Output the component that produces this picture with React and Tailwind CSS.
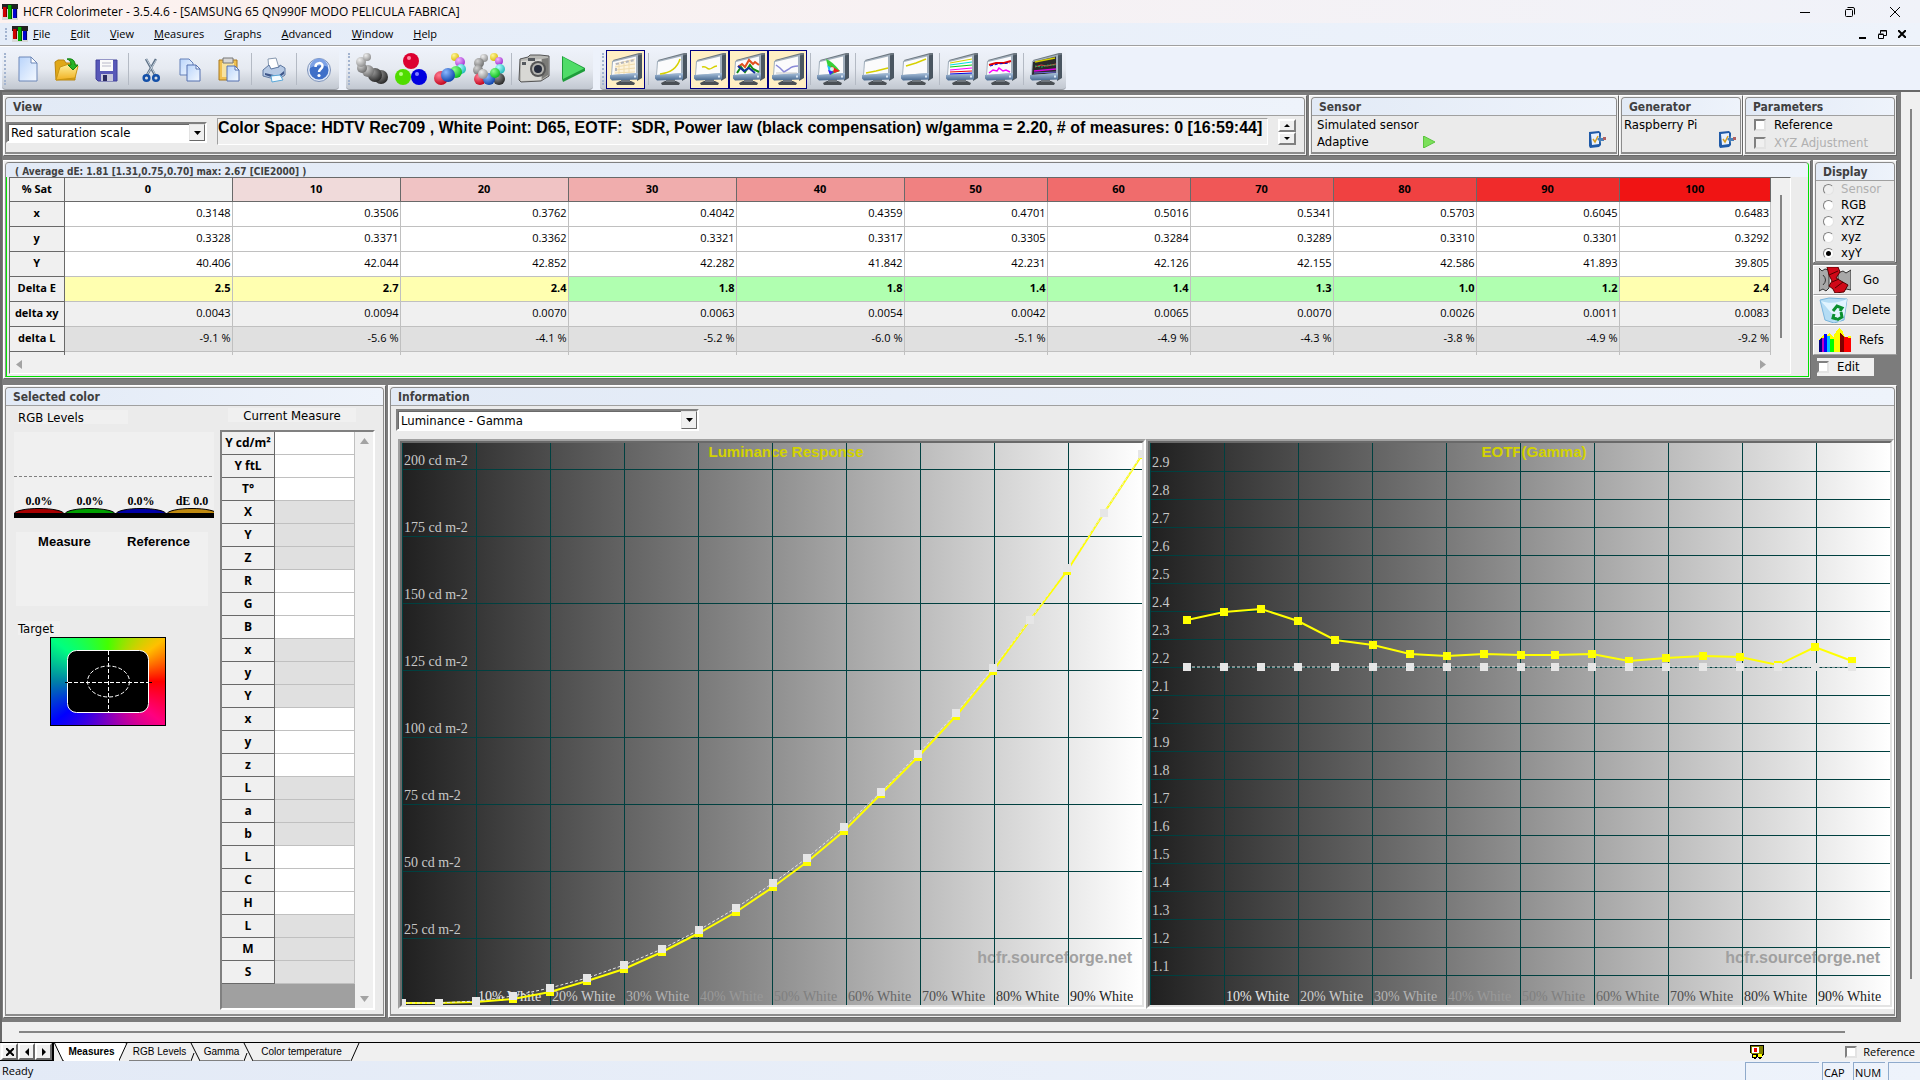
import React from "react";

const menus = ["File", "Edit", "View", "Measures", "Graphs", "Advanced", "Window", "Help"];

const columns = [
  { sat: "0", head: "bg-[#f0f0f0]", x: "0.3148", y: "0.3328", Y: "40.406", de: "2.5", dxy: "0.0043", dl: "-9.1 %", warn: true },
  { sat: "10", head: "bg-[#f0dada]", x: "0.3506", y: "0.3371", Y: "42.044", de: "2.7", dxy: "0.0094", dl: "-5.6 %", warn: true },
  { sat: "20", head: "bg-[#f0c3c4]", x: "0.3762", y: "0.3362", Y: "42.852", de: "2.4", dxy: "0.0070", dl: "-4.1 %", warn: true },
  { sat: "30", head: "bg-[#f0adad]", x: "0.4042", y: "0.3321", Y: "42.282", de: "1.8", dxy: "0.0063", dl: "-5.2 %" },
  { sat: "40", head: "bg-[#f09797]", x: "0.4359", y: "0.3317", Y: "41.842", de: "1.8", dxy: "0.0054", dl: "-6.0 %" },
  { sat: "50", head: "bg-[#f08181]", x: "0.4701", y: "0.3305", Y: "42.231", de: "1.4", dxy: "0.0042", dl: "-5.1 %" },
  { sat: "60", head: "bg-[#f06c6c]", x: "0.5016", y: "0.3284", Y: "42.126", de: "1.4", dxy: "0.0065", dl: "-4.9 %" },
  { sat: "70", head: "bg-[#f05757]", x: "0.5341", y: "0.3289", Y: "42.155", de: "1.3", dxy: "0.0070", dl: "-4.3 %" },
  { sat: "80", head: "bg-[#f04141]", x: "0.5703", y: "0.3310", Y: "42.586", de: "1.0", dxy: "0.0026", dl: "-3.8 %" },
  { sat: "90", head: "bg-[#f02b2b]", x: "0.6045", y: "0.3301", Y: "41.893", de: "1.2", dxy: "0.0011", dl: "-4.9 %" },
  { sat: "100", head: "bg-[#f01414]", x: "0.6483", y: "0.3292", Y: "39.805", de: "2.4", dxy: "0.0083", dl: "-9.2 %", warn: true },
];

const rows = [
  { key: "x", label: "x", bg: "bg-white" },
  { key: "y", label: "y", bg: "bg-white" },
  { key: "Y", label: "Y", bg: "bg-white" },
  { key: "de", label: "Delta E", bg: "" },
  { key: "dxy", label: "delta xy", bg: "bg-[#f0f0f0]" },
  { key: "dl", label: "delta L", bg: "bg-[#e0e0e0]" },
];

const measureRows = [
  "Y cd/m²", "Y ftL", "T°", "X", "Y", "Z", "R", "G", "B", "x", "y", "Y",
  "x", "y", "z", "L", "a", "b", "L", "C", "H", "L", "M", "S",
];

const whiteLabels = [
  ["10% White", "#e6e6e6"],
  ["20% White", "#cccccc"],
  ["30% White", "#b3b3b3"],
  ["40% White", "#999999"],
  ["50% White", "#808080"],
  ["60% White", "#666666"],
  ["70% White", "#4d4d4d"],
  ["80% White", "#333333"],
  ["90% White", "#1a1a1a"],
];

const lumRef = [
  [0, 560], [37, 560], [74, 558], [111, 553], [148, 545], [185, 535], [222, 522],
  [260, 506], [297, 487], [334, 465], [371, 440], [405, 415], [442, 384], [479, 349],
  [516, 311], [554, 270], [591, 225], [628, 177], [665, 125], [702, 70], [740, 11],
];
const lumMeasured = [
  [0, 560], [37, 560], [74, 559], [111, 556], [148, 549], [185, 538], [222, 526],
  [260, 509], [297, 490], [334, 469], [371, 444], [405, 419], [442, 388], [479, 351],
  [516, 314], [554, 273], [591, 228], [628, 177], [665, 128], [702, 70], [740, 12],
];
const gammaMeasured = [
  [37, 177], [74, 169], [111, 166], [148, 178], [185, 197], [223, 202], [260, 211],
  [297, 213], [334, 211], [371, 212], [405, 212], [442, 211], [479, 218], [516, 215],
  [553, 213], [590, 214], [628, 222], [665, 204], [702, 218],
];
const gammaRef = gammaMeasured.map(([x]) => [x, 224]);

const lumTicks = [200, 175, 150, 125, 100, 75, 50, 25].map((v, i) => [v + " cd m-2", 26 + i * 67]);
const gammaTicks = Array.from({ length: 19 }, (_, i) => [
  String(Number((2.9 - i / 10).toFixed(1))),
  28 + i * 28,
]);

const Gradients = () => (
  <svg className="absolute h-0 w-0" aria-hidden="true">
    <defs>
      <linearGradient id="page" x1="0" y1="0" x2="1" y2="1">
        <stop offset="0" stopColor="#b9d4fb" />
        <stop offset="1" stopColor="#f4f9ff" />
      </linearGradient>
      <linearGradient id="bezel" x1="0" y1="0" x2="0" y2="1">
        <stop offset="0" stopColor="#a9c1dc" />
        <stop offset="1" stopColor="#47688f" />
      </linearGradient>
      <linearGradient id="plot" x1="0" y1="0" x2="1" y2="0">
        <stop offset="0" stopColor="#202020" />
        <stop offset="1" stopColor="#ffffff" />
      </linearGradient>
      <linearGradient id="folder" x1="0" y1="0" x2="0" y2="1">
        <stop offset="0" stopColor="#fff3a0" />
        <stop offset="1" stopColor="#f0b020" />
      </linearGradient>
      {[
        ["grey1", "#eeeeee", "#8d8d8d"],
        ["grey2", "#d2d2d2", "#6a6a6a"],
        ["grey3", "#9a9a9a", "#242424"],
        ["red", "#ff7a90", "#c00018"],
        ["blue", "#8ab8ff", "#0a3fa8"],
        ["green", "#8dff8d", "#07b81c"],
        ["cyan", "#b8ffff", "#18b6b6"],
        ["violet", "#f3b8ff", "#a02fd0"],
        ["yellow", "#fff79a", "#d8b800"],
      ].map(([id, a, b]) => (
        <radialGradient key={id} id={id} cx="0.35" cy="0.3" r="0.75">
          <stop offset="0" stopColor={a} />
          <stop offset="1" stopColor={b} />
        </radialGradient>
      ))}
    </defs>
  </svg>
);

const Logo = () => (
  <svg viewBox="0 0 16 16" className="h-4 w-4 shrink-0">
    <rect width="16" height="16" fill="#d8d8d8" />
    <path d="M0 0h16v5H0z" fill="#222" />
    <path d="M1 3h4v10H1z" fill="#d00000" />
    <path d="M6 1h4v14H6z" fill="#00a800" />
    <path d="M11 5h4v9h-4z" fill="#0000d0" />
    <path d="M4 3h1v10H4zM9 1h1v14H9zM14 5h1v9h-1z" fill="#000" opacity=".45" />
  </svg>
);

const Balls = ({ items }) => (
  <svg viewBox="0 0 32 32" className="h-8 w-8">
    {items.map(([x, y, r, fill], i) => (
      <circle key={i} cx={x} cy={y} r={r} fill={`url(#${fill})`} />
    ))}
  </svg>
);

const Monitor = ({ dark, children }) => (
  <svg viewBox="0 0 32 32" className="h-8 w-8">
    <path d="M6 30l4-2h11l4 2-1 2H7z" fill="#4a4f54" />
    <path d="M11 26h9v3h-9z" fill="#70777e" />
    <path d="M27 1.500l5-1.500v25l-5 3z" fill="#4a5661" />
    <path d="M3 7L29 0h3v1.500L4 9z" fill="#6d7780" />
    <path d="M2 8l26-6.500V21L1 24z" fill="#a3b0bd" />
    <path d="M3 9l23-5.500V20L2 22z" fill={dark ? "#2b2b2b" : "#fbfbfc"} />
    <path d="M0 22l28-2v6.500l-26 1-2-2z" fill="url(#bezel)" />
    <path d="M24 22.500h2v2h-2z" fill="#dce8f5" />
    {children}
  </svg>
);

const icons = {
  page: (
    <svg viewBox="0 0 32 32" className="h-8 w-8">
      <path d="M7 4h12l6 6v18H7z" fill="url(#page)" stroke="#6c87b8" />
      <path d="M19 4v6h6z" fill="#fff" stroke="#6c87b8" />
    </svg>
  ),
  open: (
    <svg viewBox="0 0 32 32" className="h-8 w-8">
      <path d="M4 9l3-2h6l2 3h9v17H5z" fill="#e0a818" stroke="#b98510" />
      <path d="M5 27l4-13 9-3 9 2-3 12z" fill="url(#folder)" stroke="#c99512" />
      <path d="M16 6c6-1 8 2 8 6h3l-5 5-5-5h3c0-3-1-5-4-6z" fill="#27b327" stroke="#128212" />
    </svg>
  ),
  save: (
    <svg viewBox="0 0 32 32" className="h-8 w-8">
      <path d="M6 7h21v21H8l-2-2z" fill="#5858b8" stroke="#40409a" />
      <path d="M10 7h13v11H10z" fill="#fafafa" />
      <path d="M12 10h9M12 13h9" stroke="#b8b8c8" />
      <path d="M11 21h12v7H11z" fill="#c8c8dc" />
      <path d="M13 22h4v6h-4z" fill="#2a2a60" />
    </svg>
  ),
  cut: (
    <svg viewBox="0 0 32 32" className="h-8 w-8" fill="none">
      <path d="M11 6l9 16M21 6l-9 16" stroke="#5d7186" strokeWidth="2.500" />
      <path d="M11.500 6l9 16M21.500 6.500L12 22" stroke="#d8e2ee" strokeWidth=".8" />
      <circle cx="11.500" cy="25" r="2.800" stroke="#1450a8" strokeWidth="2.500" />
      <circle cx="21" cy="25" r="2.800" stroke="#1450a8" strokeWidth="2.500" />
    </svg>
  ),
  copy: (
    <svg viewBox="0 0 32 32" className="h-8 w-8">
      <path d="M6 6h9l4 4v12H6z" fill="url(#page)" stroke="#6580b8" />
      <path d="M13 12h9l4 4v12H13z" fill="url(#page)" stroke="#5570b0" />
      <path d="M22 12v4h4z" fill="#fff" stroke="#5570b0" />
    </svg>
  ),
  paste: (
    <svg viewBox="0 0 32 32" className="h-8 w-8">
      <path d="M6 7h18v20H6z" fill="#f0c050" stroke="#a87820" />
      <path d="M9 10h12v14H9z" fill="#f7e2a0" />
      <path d="M10 5h10v5H10z" fill="#d8d8d8" stroke="#777" />
      <path d="M14 13h8l4 4v11H14z" fill="url(#page)" stroke="#5570b0" />
      <path d="M22 13v4h4z" fill="#fff" stroke="#5570b0" />
    </svg>
  ),
  print: (
    <svg viewBox="0 0 32 32" className="h-8 w-8">
      <path d="M10 6l8-1 3 10-10 2z" fill="#fff" stroke="#8899b0" />
      <path d="M5 17l6-5 2 4 8-2 1-2 5 3v7l-7 5-15-4z" fill="#b6c9e4" stroke="#5d77a0" />
      <path d="M7 20l13 3 6-5v3l-7 5-12-4z" fill="#3f578a" />
      <path d="M13 23l9-1 3 5-11 2z" fill="#f4fbff" stroke="#5aa8d8" />
    </svg>
  ),
  help: (
    <svg viewBox="0 0 32 32" className="h-8 w-8">
      <circle cx="16" cy="17" r="11.500" fill="#dfe8f8" stroke="#7d92b8" />
      <circle cx="16" cy="17" r="9.500" fill="#3f6fc8" />
      <path d="M7 15a9 9 0 0 1 18-1c-5-2-12-2-18 1z" fill="#7ea2e6" />
      <path d="M12.500 14c0-5 7-5 7-1 0 3-3.500 3-3.500 6" fill="none" stroke="#fff" strokeWidth="2.500" />
      <circle cx="16" cy="22.500" r="1.600" fill="#fff" />
    </svg>
  ),
  greys: (
    <Balls items={[[25, 24, 7, "grey3"], [19, 22, 7, "grey3"], [12, 18, 6, "grey2"], [6, 15, 5, "grey2"], [5, 9, 5, "grey1"], [11, 4, 4, "grey1"]]} />
  ),
  primaries: (
    <svg viewBox="0 0 32 32" className="h-8 w-8">
      <circle cx="16" cy="8" r="8" fill="#dc0030" />
      <circle cx="8" cy="24" r="8" fill="#50dc00" />
      <circle cx="24" cy="24" r="8" fill="#0000e0" />
      <circle cx="14" cy="5" r="2" fill="#ff8aa4" />
      <circle cx="6" cy="21" r="2" fill="#b4ff80" />
      <circle cx="22" cy="21" r="2" fill="#8080ff" />
    </svg>
  ),
  chain: (
    <Balls items={[[21, 4, 4, "yellow"], [26, 9, 5, "violet"], [27, 16, 5, "cyan"], [22, 19, 6, "green"], [7, 25, 7, "red"], [14, 22, 7, "blue"]]} />
  ),
  ring: (
    <Balls items={[[11, 5, 4, "grey1"], [21, 4, 4, "yellow"], [6, 10, 5, "grey2"], [26, 8, 4, "violet"], [27, 16, 5, "cyan"], [5, 17, 5, "grey2"], [7, 26, 6, "red"], [26, 26, 6, "grey3"], [16, 26, 6, "blue"], [10, 21, 5, "grey1"], [22, 20, 5, "green"]]} />
  ),
  camera: (
    <svg viewBox="0 0 32 32" className="h-8 w-8">
      <path d="M2 6l8-2 2-2h10l9 1v20l-8 5-20 1-2-2z" fill="#b8b8b4" stroke="#555" />
      <path d="M3 8l20-2v21L3 28z" fill="#d8d8d4" />
      <path d="M24 6l6-1v17l-6 4z" fill="#7b7b78" />
      <circle cx="20" cy="16" r="8" fill="#555" />
      <circle cx="20" cy="16" r="6" fill="#b4b4b0" />
      <circle cx="20" cy="16" r="4" fill="#262c3c" />
      <path d="M4 9h4v3H4zM10 5h7v3h-7z" fill="#55595e" />
    </svg>
  ),
  play: (
    <svg viewBox="0 0 32 32" className="h-8 w-8">
      <path d="M5 3l23 12v3L6 29l-1-3z" fill="#1e9c3a" />
      <path d="M6 4l21 11.500L6 26z" fill="#4fdc68" />
    </svg>
  ),
  table: (
    <Monitor>
      <path d="M5 12l20-5v12L4 21z" fill="#fdf3dc" />
      <path d="M5 11l20-5M5 14l20-3M5 17l20-2M5 20l20-1M9 11v10M14 10v11M19 8v12" stroke="#f0dcae" fill="none" />
      <path d="M6 11l19-4M6 15v5" stroke="#b4b4ba" strokeDasharray="3 2" strokeWidth="2" />
    </Monitor>
  ),
  lum: <Monitor><path d="M5 21c9-1 17-5 20-15" stroke="#d6d000" strokeWidth="1.500" fill="none" /></Monitor>,
  gamma: <Monitor><path d="M8 14q3-1 5 1t5 0 5-2" stroke="#d6d000" strokeWidth="1.500" fill="none" /></Monitor>,
  rgb: (
    <Monitor>
      <path d="M5 14l4-3 3 3 4-7 4 4 2-2 4 3" stroke="#e05020" strokeWidth="2" fill="none" />
      <path d="M4 20l4-6 4 5 5-7 3 4 6 3" stroke="#138a13" strokeWidth="2" fill="none" />
      <path d="M5 13l6 5 5-3 6 5" stroke="#1030a0" strokeWidth="2" fill="none" />
    </Monitor>
  ),
  temp: (
    <Monitor>
      <path d="M4 12l4 3 4 4 5-3q3-3 9-3" stroke="#8a8ad8" strokeWidth="1.500" fill="none" />
      <path d="M4 20h21" stroke="#c8c8c8" />
    </Monitor>
  ),
  cie: (
    <Monitor>
      <path d="M9 6q6 2 14 12l-10 4z" fill="#38d038" />
      <path d="M14 13l9 5-6 2z" fill="#f02020" />
      <path d="M10 12l6 4-3 6z" fill="#20c0ff" />
      <path d="M11 17l6 2-4 3z" fill="#4020f0" />
      <circle cx="15" cy="16" r="2" fill="#fff" opacity=".8" />
    </Monitor>
  ),
  nearBlack: <Monitor><path d="M4 20l10-2 12-3" stroke="#d6d000" strokeWidth="1.500" fill="none" /></Monitor>,
  nearWhite: <Monitor><path d="M5 13l10-3 10-4" stroke="#d6d000" strokeWidth="1.500" fill="none" /></Monitor>,
  sat: (
    <Monitor>
      <path d="M4 10l22-4" stroke="#d6d000" />
      <path d="M4 12l22-3" stroke="#00e0e0" />
      <path d="M4 14l22-2" stroke="#10d010" />
      <path d="M4 17l22-2" stroke="#ff00ff" />
      <path d="M4 19l22-1" stroke="#f00000" />
      <path d="M4 21l22-1" stroke="#0000e0" />
    </Monitor>
  ),
  satShift: (
    <Monitor>
      <path d="M4 12l7-2 8 0 7-2" stroke="#e00000" strokeWidth="2" fill="none" />
      <path d="M5 13l8-2 12-1" stroke="#0000d0" strokeDasharray="3 2" fill="none" />
      <path d="M4 20l4-3 4 1 2-3 4 3 3-1 4 2" stroke="#ff00ff" strokeWidth="1.500" fill="none" />
    </Monitor>
  ),
  free: (
    <Monitor dark>
      <path d="M5 9l20-4" stroke="#d6d000" strokeWidth="1.500" />
      <path d="M5 14l6-2 6 1 9-2" stroke="#e04040" fill="none" />
      <path d="M5 13l7 1 6-2 8 0" stroke="#20c060" strokeDasharray="2 1" fill="none" />
      <path d="M4 18l22-2" stroke="#e000e0" strokeWidth="1.500" />
      <path d="M4 20l22-1" stroke="#6868e0" />
    </Monitor>
  ),
};

const Tool = ({ icon, label, on }) => (
  <button
    type="button"
    title={label}
    aria-label={label}
    className={
      on
        ? "flex h-[39px] w-[39px] items-center justify-center border border-[#000080] bg-[#ffefc4]"
        : "flex h-[39px] w-[39px] items-center justify-center"
    }
  >
    {icons[icon]}
  </button>
);

const Split = () => <span className="mr-0.5 ml-[3px] h-8 w-px bg-[#b4bac4]" />;

const Grip = () => (
  <span className="mr-0.5 ml-0.5 h-8 border-l-2 border-dotted border-[#a3b4d0]" />
);

const ToolGroup = ({ children }) => (
  <div className="flex items-center rounded-b border-b border-[#9a9ea6] bg-linear-to-b from-[#eef2fa] via-[#e6eaf1] to-[#c2c8d1] pr-px">
    <Grip />
    {children}
  </div>
);

const Panel = ({ title, className = "", children }) => (
  <section className={"flex flex-col border border-t-white border-l-white border-r-[#696969] border-b-[#696969] bg-[#f0f0f0] p-px " + className}>
    <div className="flex flex-1 flex-col rounded-t border border-[#8c8c8c] border-b-2 bg-[#ebebeb]">
      <h2 className="h-[18px] border-b border-[#a0a0a0] rounded-t bg-linear-to-r from-[#e2eaf6] to-[#eef3fb] pl-[7px] text-xs leading-[19px] font-bold text-[#404040]">
        {title}
      </h2>
      {children}
    </div>
  </section>
);

const Combo = ({ label, value, className }) => (
  <div className={"flex border-2 border-t-[#808080] border-l-[#808080] border-r-white border-b-white bg-white " + className}>
    <select aria-label={label} className="min-w-0 flex-1 appearance-none border-t border-l border-[#696969] bg-white pl-0.5 text-[13px] leading-4">
      <option>{value}</option>
    </select>
    <span className="flex w-4 items-center justify-center border border-t-[#e3e3e3] border-l-[#e3e3e3] border-r-[#696969] border-b-[#696969] bg-[#f0f0f0]">
      <svg viewBox="0 0 7 4" className="h-1 w-[7px]"><path d="M0 0h7L3.500 4z" /></svg>
    </span>
  </div>
);

const SpinButton = ({ label, d }) => (
  <button type="button" aria-label={label} className="flex h-[13px] w-[18px] items-center justify-center border-2 border-t-white border-l-white border-r-[#808080] border-b-[#808080] bg-[#f0f0f0]">
    <svg viewBox="0 0 6 3" className="h-[3px] w-1.5"><path d={d} /></svg>
  </button>
);

const ConfigButton = ({ label }) => (
  <button type="button" aria-label={label}>
    <svg viewBox="0 0 18 18" className="h-[18px] w-[18px]">
      <path d="M1 2l10-1 2 2v12l-2 2-9 1-1-2z" fill="#1f5aa8" />
      <path d="M3 4l8-1v11l-7 1z" fill="#e8f2ff" />
      <path d="M5 9l2 3 3-6" fill="none" stroke="#d8a020" strokeWidth="1.500" />
      <path d="M9 9l4-3v2h3v3h-3v2z" fill="#4a80b8" />
      <path d="M15 7h3v3h-3z" fill="#b06060" />
    </svg>
  </button>
);

const tick =
  "h-3 w-3 shrink-0 appearance-none border-2 border-t-[#808080] border-l-[#808080] border-r-[#e3e3e3] border-b-[#e3e3e3] bg-white";

const Chart = ({ title, ticks, measured, reference, name }) => (
  <div className="min-w-0 flex-1 border-2 border-t-[#a0a0a0] border-l-[#a0a0a0] border-r-white border-b-white">
    <div className="border-2 border-t-[#696969] border-l-[#696969] border-r-[#e3e3e3] border-b-[#e3e3e3]">
      <svg viewBox="0 0 740 562" className="block h-auto w-full font-['Liberation_Serif',serif]" role="img" aria-label={name}>
        <rect width="740" height="562" fill="url(#plot)" />
        <g fill="#c8c8c8" fontSize="14">
          {ticks.map(([text, y]) => (
            <text key={text} x="2" y={y - 4}>{text}</text>
          ))}
        </g>
        <g fontSize="14">
          {whiteLabels.map(([text, fill], i) => (
            <text key={text} x={76 + i * 74} y="558" fill={fill}>{text}</text>
          ))}
        </g>
        <text x="384" y="14" textAnchor="middle" fill="#d2d200" className="font-['Liberation_Sans',sans-serif] text-[15px] font-bold">
          {title}
        </text>
        <text x="730" y="520" textAnchor="end" fill="#a0a0a0" className="font-['Liberation_Sans',sans-serif] text-[16px] font-bold">
          hcfr.sourceforge.net
        </text>
        <g stroke="#004040" shapeRendering="crispEdges">
          {ticks.map(([text, y]) => (
            <path key={text} d={`M0 ${y + 0.5}H740`} />
          ))}
          {Array.from({ length: 10 }, (_, i) => (
            <path key={i} d={`M${i * 74 + 0.5} 0V562`} />
          ))}
        </g>
        <polyline points={measured.join(" ")} fill="none" stroke="#ffff00" strokeWidth="2" />
        {measured.map(([x, y]) => (
          <rect key={x} x={x - 4} y={y - 4} width="8" height="8" fill="#ffff00" />
        ))}
        <polyline points={reference.join(" ")} fill="none" stroke="#e6e6e6" strokeDasharray="3 2" />
        {reference.map(([x, y]) => (
          <rect key={x} x={x - 4} y={y - 4} width="8" height="8" fill="#e6e6e6" />
        ))}
      </svg>
    </div>
  </div>
);

const SaturationTable = () => (
  <table className="w-full table-fixed border-collapse font-['Open_Sans',sans-serif] text-[11px]">
    <colgroup>
      <col className="w-[54px]" />
      {columns.map((c, i) => (
        <col key={c.sat} className={i < 5 ? "w-[168px]" : i < 10 ? "w-[143px]" : ""} />
      ))}
    </colgroup>
    <thead>
      <tr className="h-[23px] border-b border-[#696969]">
        <th scope="col" className="border-r border-[#696969] bg-[#f0f0f0] font-bold">% Sat</th>
        {columns.map((c) => (
          <th key={c.sat} scope="col" className={"border-r border-[#696969] font-bold " + c.head}>
            {c.sat}
          </th>
        ))}
      </tr>
    </thead>
    <tbody>
      {rows.map((r) => (
        <tr key={r.key} className={"h-[25px] border-b border-[#c0c0c0] " + r.bg}>
          <th scope="row" className="border-r border-b border-[#696969] bg-[#f0f0f0] font-bold">
            {r.label}
          </th>
          {columns.map((c) => (
            <td
              key={c.sat}
              className={
                "border-r border-[#c0c0c0] pr-px text-right " +
                (r.key !== "de" ? "" : c.warn ? "bg-[#ffffb0] font-bold" : "bg-[#b0ffb0] font-bold")
              }
            >
              {c[r.key]}
            </td>
          ))}
        </tr>
      ))}
      <tr className="h-1" aria-hidden="true">
        <th className="border-r border-[#696969]" />
        {columns.map((c) => (
          <td key={c.sat} className="border-r border-[#c0c0c0]" />
        ))}
      </tr>
    </tbody>
  </table>
);

const RgbLevels = () => (
  <svg viewBox="0 0 200 86" className="block h-[86px] w-[200px]" role="img" aria-label="RGB levels">
    <rect width="200" height="86" fill="#f0f0f0" />
    <path d="M0 44.500H200" stroke="#808080" strokeDasharray="3 2" />
    {[
      ["0.0%", 25, "#a80000"],
      ["0.0%", 76, "#00a000"],
      ["0.0%", 127, "#0000a8"],
      ["dE 0.0", 178, "#c08a10"],
    ].map(([text, x, fill]) => (
      <g key={x}>
        <ellipse cx={x} cy="82" rx="25" ry="5.500" fill={fill} stroke="#000" />
        <text x={x} y="73" textAnchor="middle" className="font-['Liberation_Serif',serif] text-[12px] font-bold">
          {text}
        </text>
      </g>
    ))}
    <path d="M0 81h200v5H0z" />
  </svg>
);

const Target = () => (
  <div className="ml-11 h-[89px] w-[116px] border border-black bg-[conic-gradient(#44ff00_0deg,#ffc000_53deg,#ff0000_90deg,#ff0080_127deg,#8000c0_180deg,#0000ff_233deg,#0080a8_270deg,#00ff80_307deg,#44ff00_360deg)]">
    <svg viewBox="0 0 114 87" className="block h-full w-full" fill="none" stroke="#fff">
      <rect x="16.500" y="12.500" width="81" height="62" rx="9" fill="#000" />
      <path d="M14 44.500H101" stroke="#000" />
      <path d="M17 44.500H98M57.500 13V75" strokeDasharray="4 2" />
      <ellipse cx="57.500" cy="43.500" rx="21" ry="15.500" strokeDasharray="4 2" />
    </svg>
  </div>
);

const sideButton =
  "flex h-[30px] w-full items-center border border-t-white border-l-white border-r-[#808080] border-b-[#a0a0a0] bg-[#ebebeb] pl-[5px] text-[13px]";

const SideColumn = () => (
  <div className="flex w-[84px] shrink-0 flex-col">
    <Panel title="Display" className="h-[103px]">
      <div className="flex flex-col pl-[7px]">
        {["Sensor", "RGB", "XYZ", "xyz", "xyY"].map((name) => (
          <label key={name} className={"flex h-4 items-center gap-[7px] text-[13px] " + (name === "Sensor" ? "text-[#b0b0b0]" : "")}>
            <input
              type="radio"
              name="display"
              disabled={name === "Sensor"}
              defaultChecked={name === "xyY"}
              className="flex h-[11px] w-[11px] appearance-none items-center justify-center rounded-full border border-t-[#808080] border-l-[#808080] border-r-[#e3e3e3] border-b-[#e3e3e3] bg-white checked:before:h-[5px] checked:before:w-[5px] checked:before:rounded-full checked:before:bg-black disabled:bg-[#f0f0f0]"
            />
            {name}
          </label>
        ))}
      </div>
    </Panel>
    <button type="button" className={"mt-0.5 " + sideButton}>
      <svg viewBox="0 0 32 26" className="mr-3 h-[26px] w-8">
        <path d="M0 1l3 3 3-2 4 1v18l-3 3-3-2-4 2z" fill="#a8a8a8" stroke="#333" />
        <path d="M4 8q5 5 0 10" fill="none" stroke="#333" />
        <path d="M19 6l5-2 3 2 5-3v20l-5-1-4 2-4-2z" fill="#a8a8a8" stroke="#333" />
        <path d="M8 0h11l2 5-4 6 5 3 7 4-4 7-9 1-2-4-4-3 3-5-3-6z" fill="#d00818" stroke="#500" />
        <path d="M10 8l9-4M13 15l7-3M16 21l8-6" stroke="#500" />
      </svg>
      Go
    </button>
    <button type="button" className={sideButton}>
      <svg viewBox="0 0 30 26" className="mr-[3px] h-[26px] w-[30px] shrink-0">
        <path d="M1 3l9-2 18 1-3 21-10 3-9-3z" fill="#b4dcf4" stroke="#7ab4dc" />
        <path d="M2 4c8 3 18 2 26-2l-3 18-5 5z" fill="#e2f4ff" />
        <path d="M14 14l4-5 5 2-2 3M22 15l1 5-5 3M15 17l-1 4 4 1" fill="none" stroke="#0a9030" strokeWidth="3" />
      </svg>
      Delete
    </button>
    <button type="button" className={sideButton}>
      <svg viewBox="0 0 32 24" className="mr-2 h-6 w-8" shapeRendering="crispEdges">
        <path d="M0 12l4-5 3 3 3-5 5 5 2-6 3-4 3 2 3 7 6-1v4H0z" fill="#ffff00" />
        <path d="M0 12l3-2v14H0z" fill="#000080" />
        <path d="M3 10l3 1v13H3z" fill="#c000c0" />
        <path d="M5 6h3v18H5z" fill="#0000ff" />
        <path d="M8 8h3v16H8z" fill="#00c0ff" />
        <path d="M11 11h4v13h-4z" fill="#00ff00" />
        <path d="M15 6h6v18h-6z" fill="#ffff00" />
        <path d="M21 5l4 4v15h-4z" fill="#800000" />
        <path d="M25 9l7 1v14h-7z" fill="#ff0000" />
      </svg>
      Refs
    </button>
    <label className="mt-[3px] ml-1 flex h-[18px] w-[57px] items-center gap-2 bg-[#f0f0f0] text-[13px]">
      <input type="checkbox" className={tick} />
      Edit
    </label>
  </div>
);

const ViewBar = () => (
  <div className="flex">
    <Panel title="View" className="mr-0.5 min-w-0 flex-1">
      <div className="flex flex-1 items-start gap-2.5 pt-0.5">
        <Combo label="Scale" value="Red saturation scale" className="mt-1 h-[21px] w-[201px] shrink-0" />
        <p className="h-[27px] min-w-0 flex-1 overflow-hidden border border-t-[#a0a0a0] border-l-[#a0a0a0] border-r-white border-b-white bg-[#f0f0f0] font-['Liberation_Sans',sans-serif] text-base leading-[18px] font-bold whitespace-pre">
          Color Space: HDTV Rec709 , White Point: D65, EOTF:  SDR, Power law (black compensation) w/gamma = 2.20, # of measures: 0 [16:59:44]
        </p>
        <div className="mr-2 pt-px">
          <SpinButton label="Previous" d="M0 3h6L3 0z" />
          <SpinButton label="Next" d="M0 0h6L3 3z" />
        </div>
      </div>
    </Panel>
    <Panel title="Sensor" className="h-[61px] w-[310px]">
      <div className="flex flex-1 justify-between pr-2.5 pl-[5px] text-[13px] leading-[17px]">
        <div>
          <p>Simulated sensor</p>
          <p className="flex items-center gap-[54px]">
            Adaptive
            <svg viewBox="0 0 12 12" className="h-3 w-3"><path d="M.5 0L12 6 .5 12z" fill="#7be05a" stroke="#5cc440" /></svg>
          </p>
        </div>
        <div className="self-end"><ConfigButton label="Configure sensor" /></div>
      </div>
    </Panel>
    <Panel title="Generator" className="h-[61px] w-[124px]">
      <div className="flex flex-1 justify-between pr-1 pl-0.5 text-[13px] leading-[17px]">
        <p className="whitespace-nowrap">Raspberry Pi</p>
        <div className="-ml-4 self-end"><ConfigButton label="Configure generator" /></div>
      </div>
    </Panel>
    <Panel title="Parameters" className="h-[61px] w-[154px]">
      <div className="flex flex-1 flex-col pl-2 text-[13px] leading-[18px]">
        <label className="flex items-center gap-2"><input type="checkbox" className={tick} />Reference</label>
        <label className="flex items-center gap-2 whitespace-nowrap text-[#b0b0b0]">
          <input type="checkbox" disabled className={tick + " disabled:bg-[#f0f0f0]"} />XYZ Adjustment
        </label>
      </div>
    </Panel>
  </div>
);

const MeasuresPanel = () => (
  <section className="mr-0.5 min-w-0 flex-1 border border-t-white border-l-white border-r-[#696969] border-b-[#696969] bg-[#f0f0f0] p-px">
    <div className="rounded-t border border-t-[#808080] border-r-[#00e000] border-b-[#00e000] border-l-[#909090] bg-[#ececec]">
      <h2 className="h-[14px] overflow-hidden rounded-t bg-linear-to-r from-[#e2eaf6] to-[#eef3fb] pl-[9px] text-[10px] leading-[18px] font-bold text-[#404040]">
        ( Average dE: 1.81 [1.31,0.75,0.70] max: 2.67 [CIE2000] )
      </h2>
      <div className="border-l border-[#00e000] pr-[17px] pb-0.5 pl-0.5">
        <div className="border border-t-[#696969] border-l-[#696969] border-r-white border-b-white bg-[#f0f0f0]">
          <div className="flex">
            <div className="min-w-0 flex-1"><SaturationTable /></div>
            <div className="flex w-[19px] justify-center py-[17px]">
              <span className="w-0.5 bg-[#858585]" />
            </div>
          </div>
          <div className="flex h-[18px] items-center justify-between pr-6 pl-1.5">
            <svg viewBox="0 0 6 9" className="h-[9px] w-1.5"><path d="M6 0v9L0 4.500z" fill="#a3a3a3" /></svg>
            <svg viewBox="0 0 6 9" className="h-[9px] w-1.5"><path d="M0 0v9l6-4.500z" fill="#a3a3a3" /></svg>
          </div>
        </div>
      </div>
    </div>
  </section>
);

const SelectedColor = () => (
  <Panel title="Selected color" className="mr-0.5 w-[383px] shrink-0">
    <div className="flex flex-1 text-[13px] leading-[15px]">
      <div className="w-[214px] pt-1 pl-2">
        <h3 className="ml-1 h-[14px] w-[110px] bg-[#f0f0f0]">RGB Levels</h3>
        <div className="mt-2"><RgbLevels /></div>
        <div className="mt-[14px] ml-0.5 flex h-[74px] w-48 justify-around bg-[#f0f0f0] pt-0.5 pl-1 font-['Liberation_Sans',sans-serif] text-[13px] font-bold">
          <span>Measure</span>
          <span>Reference</span>
        </div>
        <h3 className="mt-[15px] mb-0.5 ml-1 h-[14px] w-[42px] bg-[#f0f0f0]">Target</h3>
        <div className="-ml-2"><Target /></div>
      </div>
      <div className="flex flex-col pt-0.5 pb-1">
        <h3 className="ml-2 h-[14px] w-32 bg-[#f0f0f0] text-center">Current Measure</h3>
        <div className="mt-2 flex flex-1 border-2 border-t-[#808080] border-l-[#808080] border-r-white border-b-white bg-[#f0f0f0]">
          <div className="bg-[#a0a0a0]">
            <table className="border-separate border-spacing-0 font-['Open_Sans',sans-serif] text-xs">
              <tbody>
                {measureRows.map((label, i) => (
                  <tr key={i} className="h-[23px]">
                    <th scope="row" className="w-[53px] border-r border-b border-[#696969] bg-[#f0f0f0] font-bold whitespace-nowrap">
                      {label}
                    </th>
                    <td className={"w-20 border-r border-b border-[#c0c0c0] " + (Math.floor(i / 3) % 2 ? "bg-[#e0e0e0]" : "bg-white")} />
                  </tr>
                ))}
              </tbody>
            </table>
          </div>
          <div className="flex w-[18px] flex-col items-center justify-between py-1.5">
            <svg viewBox="0 0 9 6" className="h-1.5 w-[9px]"><path d="M0 6h9L4.500 0z" fill="#a3a3a3" /></svg>
            <svg viewBox="0 0 9 6" className="h-1.5 w-[9px]"><path d="M0 0h9L4.500 6z" fill="#a3a3a3" /></svg>
          </div>
        </div>
      </div>
    </div>
  </Panel>
);

const Information = () => (
  <Panel title="Information" className="min-w-0 flex-1">
    <Combo label="Graph" value="Luminance - Gamma" className="mt-[3px] ml-[5px] h-[22px] w-[303px]" />
    <div className="mt-2 flex pb-[3px] pl-[7px]">
      <Chart name="Luminance" title="Luminance Response" ticks={lumTicks} measured={lumMeasured} reference={lumRef} />
      <Chart name="Gamma" title="EOTF(Gamma)" ticks={gammaTicks} measured={gammaMeasured} reference={gammaRef} />
    </div>
  </Panel>
);

const Slant = ({ d, fill = "none" }) => (
  <svg viewBox="0 0 10 18" className="h-[18px] w-2.5" fill={fill} stroke="#000">
    <path d={d} />
  </svg>
);

const tabNav =
  "flex h-[17px] w-[17px] items-center justify-center border-2 border-t-white border-l-white border-r-[#696969] border-b-[#696969] bg-[#f0f0f0]";

const TabBar = () => (
  <div className="flex h-[19px] items-center justify-between border-t border-black bg-[#f0f0f0] font-['Liberation_Sans',sans-serif]">
    <div className="flex h-[18px] text-[10px] leading-[18px]">
      <div className="flex border-r-2 border-b border-black pl-px">
        <button type="button" aria-label="Close view" className={tabNav}>
          <svg viewBox="0 0 8 8" className="h-2 w-2"><path d="M0 0l8 8M8 0L0 8" stroke="#000" strokeWidth="2" /></svg>
        </button>
        <button type="button" aria-label="Previous tab" className={tabNav}>
          <svg viewBox="0 0 4 8" className="h-2 w-1"><path d="M4 0v8L0 4z" /></svg>
        </button>
        <button type="button" aria-label="Next tab" className={tabNav}>
          <svg viewBox="0 0 4 8" className="h-2 w-1"><path d="M0 0v8l4-4z" /></svg>
        </button>
      </div>
      <Slant d="M0 -1L9 18L12 18L12 -1z" fill="#fff" />
      <button type="button" className="w-[55px] bg-white font-bold">Measures</button>
      <Slant d="M-2 -2L-2 20L0 17.500L8 0z" fill="#fff" />
      <button type="button" className="w-[61px] border-b border-[#808080]">RGB Levels</button>
      <Slant d="M1 0l9 18M4 10L1 18" />
      <button type="button" className="w-[43px] border-b border-[#808080]">Gamma</button>
      <Slant d="M1 0l9 18M4 10L1 18" />
      <button type="button" className="w-[97px] border-b border-[#808080]">Color temperature</button>
      <Slant d="M9 0L1 18" />
    </div>
    <div className="flex items-center pr-[5px] text-xs">
      <svg viewBox="0 0 14 14" className="mr-[81px] h-[14px] w-[14px]" shapeRendering="crispEdges">
        <path d="M0 0h14v9l-2 2v2l-3 1-2-2-2 2-3-1v-3l-2-2z" fill="#000" />
        <path d="M1 1h12v8H1z" fill="#808000" />
        <path d="M2 2h7v6H2z" fill="#fff" />
        <path d="M4 3h3v4H4z" fill="#f00000" />
        <path d="M3 10h3v2H3zM8 9h4v3H8z" fill="#ffff00" />
      </svg>
      <label className="flex items-center gap-1.5 font-['Open_Sans',sans-serif] text-[11px]">
        <input type="checkbox" className={tick} />
        Reference
      </label>
    </div>
  </div>
);

const StatusBar = () => (
  <footer className="flex h-[19px] items-stretch justify-between bg-linear-to-r from-[#e3eaf6] to-[#eef3fb] pl-0.5 font-['Open_Sans',sans-serif] text-[11px] leading-[20px]">
    <span>Ready</span>
    <div className="flex gap-[3px] pt-px">
      <span className="w-[74px] border-t border-l border-[#8faacb]" />
      <span className="w-7 overflow-hidden border-t border-l border-[#8faacb] pl-px">CAP</span>
      <span className="w-8 overflow-hidden border-t border-l border-[#8faacb] pl-px">NUM</span>
      <span className="w-8 border-t border-l border-[#8faacb]" />
    </div>
  </footer>
);

const App = () => {
  return (
    <div className="flex min-h-screen flex-col bg-[#f0f0f0] font-['DejaVu_Sans_Condensed','DejaVu_Sans',sans-serif] text-black">
      <Gradients />
      <header className="flex h-[23px] items-center justify-between bg-linear-to-r from-[#fdf1ee] to-[#f0f2f9] pl-0.5 font-['Open_Sans',sans-serif] text-xs">
        <h1 className="flex items-center gap-[5px]"><Logo />HCFR Colorimeter - 3.5.4.6 - [SAMSUNG 65 QN990F MODO PELICULA FABRICA]</h1>
        <div className="flex items-center gap-[35px] pr-5">
          <button type="button" aria-label="Minimize"><svg viewBox="0 0 10 10" className="h-2.5 w-2.5" stroke="#000"><path d="M0 5.500h10" /></svg></button>
          <button type="button" aria-label="Restore"><svg viewBox="0 0 10 10" className="h-2.5 w-2.5" fill="none" stroke="#000"><rect x=".5" y="2.500" width="7" height="7" rx="1" /><path d="M2.500.5H8q1.500 0 1.500 1.500v5.500" /></svg></button>
          <button type="button" aria-label="Close"><svg viewBox="0 0 10 10" className="h-2.5 w-2.5" stroke="#000"><path d="M0 0l10 10M10 0L0 10" /></svg></button>
        </div>
      </header>
      <nav className="flex h-[23px] items-center justify-between border-b border-[#a0a0a0] bg-linear-to-r from-[#e4ecf8] to-[#eef3fb] pr-[14px] font-['Open_Sans',sans-serif] text-[11px]">
        <div className="flex items-center">
          <span className="mr-[5px] ml-[5px] h-3 border-l-2 border-dotted border-[#a3b4d0]" />
          <Logo />
          <div className="ml-[5px] flex gap-5">
            {menus.map((m) => (
              <button key={m} type="button"><u>{m[0]}</u>{m.slice(1)}</button>
            ))}
          </div>
        </div>
        <div className="flex items-center gap-[11px]">
          <button type="button" aria-label="Minimize document"><svg viewBox="0 0 8 9" className="h-[9px] w-2"><path d="M0 7h7v2H0z" /></svg></button>
          <button type="button" aria-label="Restore document"><svg viewBox="0 0 9 9" className="h-[9px] w-[9px]" fill="none" stroke="#000"><path d="M.5 4.500h5v4h-5zM.5 4h5M2.500 3.500v-3h6v5H6M2.500 1h6" /></svg></button>
          <button type="button" aria-label="Close document"><svg viewBox="0 0 8 8" className="h-2 w-2" stroke="#000" strokeWidth="2"><path d="M0 0l8 8M8 0L0 8" /></svg></button>
        </div>
      </nav>
      <div className="flex h-11 gap-[7px] border-t border-white bg-[#edf2fb] pt-0.5 pl-0.5">
        <ToolGroup>
          <Tool icon="page" label="New" />
          <Tool icon="open" label="Open" />
          <Tool icon="save" label="Save" />
          <Split />
          <Tool icon="cut" label="Cut" />
          <Tool icon="copy" label="Copy" />
          <Tool icon="paste" label="Paste" />
          <Split />
          <Tool icon="print" label="Print" />
          <Split />
          <Tool icon="help" label="Help" />
        </ToolGroup>
        <ToolGroup>
          <Tool icon="greys" label="Measure grays" />
          <Tool icon="primaries" label="Measure primaries" />
          <Tool icon="chain" label="Measure primaries and secondaries" />
          <Tool icon="ring" label="Measure all" />
          <Split />
          <Tool icon="camera" label="Free measure" />
          <Tool icon="play" label="Continuous measures" />
        </ToolGroup>
        <ToolGroup>
          <Tool icon="table" label="Measures" on />
          <Split />
          <Tool icon="lum" label="Luminance" />
          <Tool icon="gamma" label="Gamma" on />
          <Tool icon="rgb" label="RGB levels" on />
          <Tool icon="temp" label="Color temperature" on />
          <Split />
          <Tool icon="cie" label="CIE diagram" />
          <Split />
          <Tool icon="nearBlack" label="Near black" />
          <Tool icon="nearWhite" label="Near white" />
          <Split />
          <Tool icon="sat" label="Saturation luminance" />
          <Tool icon="satShift" label="Saturation shift" />
          <Split />
          <Tool icon="free" label="Combined free measures" />
        </ToolGroup>
      </div>
      <div className="flex flex-1 border-t-2 border-l-2 border-[#696969]">
        <div className="flex min-w-0 flex-1 flex-col">
          <main className="flex flex-1 flex-col bg-[#7c7c7c] pt-[3px] pr-1 pb-1 pl-px">
            <ViewBar />
            <div className="mt-1 mb-1.5 flex">
              <MeasuresPanel />
              <SideColumn />
            </div>
            <div className="flex flex-1">
              <SelectedColor />
              <Information />
            </div>
          </main>
          <div className="flex h-5 items-center pr-14 pl-[17px]">
            <span className="h-0.5 flex-1 bg-[#858585]" />
          </div>
        </div>
        <div className="flex w-[19px] justify-center bg-[#f0f0f0] pt-[17px] pb-[63px]">
          <span className="w-0.5 bg-[#858585]" />
        </div>
      </div>
      <TabBar />
      <StatusBar />
    </div>
  );
};

export default App;
